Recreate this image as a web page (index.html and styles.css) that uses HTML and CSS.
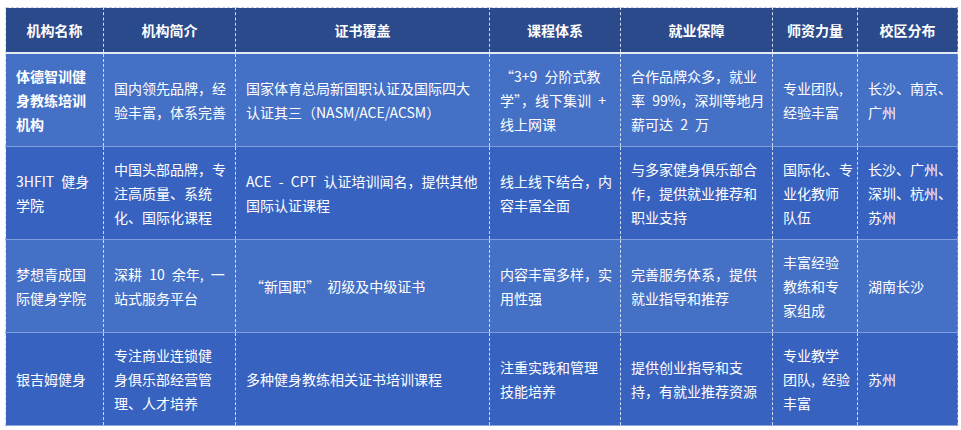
FILE: index.html
```html
<!DOCTYPE html>
<html lang="zh-CN">
<head>
<meta charset="utf-8">
<title>健身教练培训机构对比</title>
<link rel="stylesheet" href="styles.css">
</head>
<body>
<table class="cmp">
  <colgroup>
    <col class="c1"><col class="c2"><col class="c3"><col class="c4"><col class="c5"><col class="c6"><col class="c7">
  </colgroup>
  <thead>
    <tr>
      <th>机构名称</th>
      <th>机构简介</th>
      <th>证书覆盖</th>
      <th>课程体系</th>
      <th>就业保障</th>
      <th>师资力量</th>
      <th>校区分布</th>
    </tr>
  </thead>
  <tbody>
    <tr class="light">
      <td class="strong">体德智训健<br>身教练培训<br>机构</td>
      <td>国内领先品牌，经<br>验丰富，体系完善</td>
      <td>国家体育总局新国职认证及国际四大<br>认证其三（NASM/ACE/ACSM）</td>
      <td>“3+9 分阶式教<br>学”，线下集训 +<br>线上网课</td>
      <td>合作品牌众多，就业<br>率 99%，深圳等地月<br>薪可达 2 万</td>
      <td>专业团队,<br>经验丰富</td>
      <td>长沙、南京、<br>广州</td>
    </tr>
    <tr class="dark">
      <td>3HFIT 健身<br>学院</td>
      <td>中国头部品牌，专<br>注高质量、系统<br>化、国际化课程</td>
      <td>ACE - CPT 认证培训闻名，提供其他<br>国际认证课程</td>
      <td>线上线下结合，内<br>容丰富全面</td>
      <td>与多家健身俱乐部合<br>作，提供就业推荐和<br>职业支持</td>
      <td>国际化、专<br>业化教师<br>队伍</td>
      <td>长沙、广州、<br>深圳、杭州、<br>苏州</td>
    </tr>
    <tr class="light">
      <td>梦想青成国<br>际健身学院</td>
      <td>深耕 10 余年, 一<br>站式服务平台</td>
      <td class="indent">“新国职” 初级及中级证书</td>
      <td>内容丰富多样，实<br>用性强</td>
      <td>完善服务体系，提供<br>就业指导和推荐</td>
      <td>丰富经验<br>教练和专<br>家组成</td>
      <td>湖南长沙</td>
    </tr>
    <tr class="dark">
      <td>银吉姆健身</td>
      <td>专注商业连锁健<br>身俱乐部经营管<br>理、人才培养</td>
      <td>多种健身教练相关证书培训课程</td>
      <td>注重实践和管理<br>技能培养</td>
      <td>提供创业指导和支<br>持，有就业推荐资源</td>
      <td>专业教学<br>团队, 经验<br>丰富</td>
      <td>苏州</td>
    </tr>
  </tbody>
</table>
</body>
</html>
```

FILE: styles.css
```css
html, body {
  margin: 0;
  padding: 0;
  background: #ffffff;
}

body {
  padding: 7px 0 0 5px;
  font-family: "Noto Sans CJK SC", "Noto Sans", sans-serif;
  font-size: 14px;
  color: #ffffff;
}

.cmp {
  border-collapse: collapse;
  table-layout: fixed;
  width: 952px;
  border-top: 1px dashed #c9d1e4;
  border-left: 1px dashed #c9d1e4;
  border-right: 1px dashed #8a98bb;
  border-bottom: 1px solid #8fa8dc;
}

.c1 { width: 98px; }
.c2 { width: 132px; }
.c3 { width: 254px; }
.c4 { width: 131px; }
.c5 { width: 152px; }
.c6 { width: 85px; }
.c7 { width: 100px; }

.cmp th {
  height: 44px;
  padding: 0 6px;
  background: #2b4a8b;
  font-weight: 700;
  text-align: center;
  vertical-align: middle;
  line-height: 24px;
  border-left: 1px dashed #d3dbee;
  border-bottom: 2px solid #e4eaf6;
}

.cmp td {
  height: 92px;
  padding: 0 2px 0 10px;
  line-height: 24px;
  vertical-align: middle;
  text-align: left;
  white-space: nowrap;
  word-spacing: 4px;
  border-left: 1px dashed #d3dbee;
  border-top: 1px solid #7f9fdc;
}

.cmp td.indent {
  padding-left: 14px;
}

.cmp thead + tbody tr:first-child td {
  border-top: none;
}

.light td { background: #4470c6; }
.dark td { background: #3762bf; }

.strong { font-weight: 700; }
```
